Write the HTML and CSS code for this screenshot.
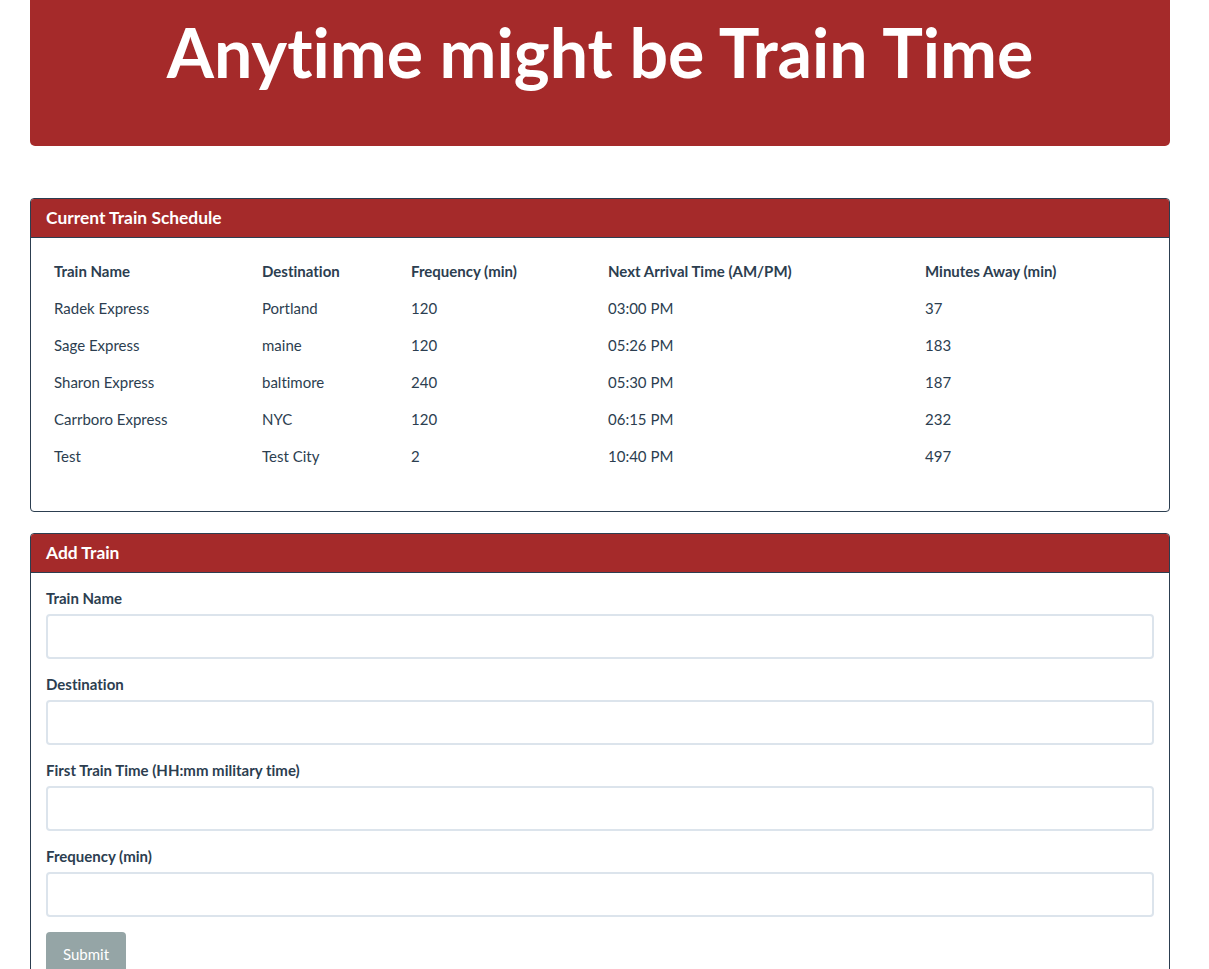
FILE: index.html
```html
<!DOCTYPE html>
<html lang="en">
<head>
<meta charset="utf-8">
<title>Train Time</title>
<link rel="stylesheet" href="styles.css">
</head>
<body>
<div class="container">
  <header class="jumbotron">
    <h1 class="title">Anytime might be Train Time</h1>
  </header>

  <section class="card schedule">
    <h2 class="card-header">Current Train Schedule</h2>
    <div class="card-body">
      <table class="table">
        <colgroup>
          <col class="c1"><col class="c2"><col class="c3"><col class="c4"><col class="c5">
        </colgroup>
        <thead>
          <tr>
            <th>Train Name</th>
            <th>Destination</th>
            <th>Frequency (min)</th>
            <th>Next Arrival Time (AM/PM)</th>
            <th>Minutes Away (min)</th>
          </tr>
        </thead>
        <tbody>
          <tr><td>Radek Express</td><td>Portland</td><td>120</td><td>03:00 PM</td><td>37</td></tr>
          <tr><td>Sage Express</td><td>maine</td><td>120</td><td>05:26 PM</td><td>183</td></tr>
          <tr><td>Sharon Express</td><td>baltimore</td><td>240</td><td>05:30 PM</td><td>187</td></tr>
          <tr><td>Carrboro Express</td><td>NYC</td><td>120</td><td>06:15 PM</td><td>232</td></tr>
          <tr><td>Test</td><td>Test City</td><td>2</td><td>10:40 PM</td><td>497</td></tr>
        </tbody>
      </table>
    </div>
  </section>

  <section class="card add">
    <h2 class="card-header">Add Train</h2>
    <form class="card-body">
      <div class="form-group">
        <label class="label" for="name">Train Name</label>
        <input class="input" id="name" type="text">
      </div>
      <div class="form-group">
        <label class="label" for="dest">Destination</label>
        <input class="input" id="dest" type="text">
      </div>
      <div class="form-group">
        <label class="label" for="first">First Train Time (HH:mm military time)</label>
        <input class="input" id="first" type="text">
      </div>
      <div class="form-group">
        <label class="label" for="freq">Frequency (min)</label>
        <input class="input" id="freq" type="text">
      </div>
      <button class="btn" type="button">Submit</button>
    </form>
  </section>
</div>
</body>
</html>
```

FILE: styles.css
```css
* { box-sizing: border-box; }

html, body {
  margin: 0;
  padding: 0;
  background: #ffffff;
}

body {
  font-family: Lato, "Open Sans", "Liberation Sans", sans-serif;
  font-size: 15px;
  line-height: 1.5;
  color: #2c3e50;
  font-variant-ligatures: none;
  overflow: hidden;
}

.container {
  width: 1140px;
  margin-left: 30px;
}

.jumbotron {
  background: #a52a2a;
  border-radius: 0 0 5px 5px;
  padding: 10px 0 53px;
  margin-bottom: 52px;
}

.title {
  margin: 0;
  font-size: 68px;
  line-height: 83px;
  font-weight: 700;
  color: #ffffff;
  text-align: center;
}

.card {
  border: 1px solid #2c3e50;
  border-radius: 4px;
  overflow: hidden;
  background: #ffffff;
}

.schedule { margin-bottom: 21px; }

.card-header {
  margin: 0;
  background: #a52a2a;
  color: #ffffff;
  font-size: 17.4px;
  font-weight: 700;
  line-height: 24px;
  padding: 7px 15px;
  border-bottom: 1px solid #2c3e50;
}

.card-body {
  padding: 15px;
  display: block;
}

.table {
  width: 100%;
  border-collapse: collapse;
  margin-bottom: 21px;
  table-layout: fixed;
}

.c1 { width: 208px; }
.c2 { width: 149px; }
.c3 { width: 197px; }
.c4 { width: 317px; }
.c5 { width: auto; }

.table th,
.table td {
  height: 37px;
  padding: 7px 8px;
  text-align: left;
  vertical-align: middle;
  line-height: 23px;
  white-space: nowrap;
}

.table th { font-weight: 700; }
.table td { font-weight: 400; }

.form-group {
  margin-bottom: 15px;
}

.label {
  display: block;
  font-weight: 700;
  line-height: 20px;
  margin-bottom: 6px;
}

.input {
  display: block;
  width: 100%;
  height: 45px;
  border: 2px solid #dce4ec;
  border-radius: 4px;
  background: #ffffff;
  font: inherit;
  color: #2c3e50;
  padding: 0 12px;
  outline: none;
}

.btn {
  display: inline-block;
  background: #95a5a6;
  color: #ffffff;
  border: 0;
  border-radius: 4px;
  font: inherit;
  line-height: 23px;
  padding: 11px 17px;
  cursor: pointer;
}
```
